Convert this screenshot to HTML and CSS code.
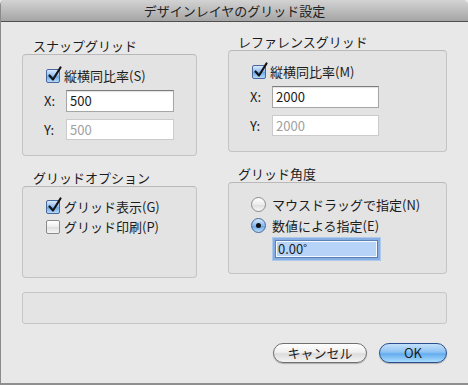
FILE: index.html
```html
<!DOCTYPE html>
<html lang="ja">
<head>
  <meta charset="UTF-8" />
  <title>デザインレイヤのグリッド設定</title>
  <link rel="stylesheet" href="styles.css">
</head>
<body>
  <div class="window">
    <!-- タイトルバー -->
    <div class="titlebar">デザインレイヤのグリッド設定</div>

    <div class="content">
      <div class="columns">
        <div class="col col-left">
          <div class="group">
            <div class="legend">スナップグリッド</div>
            <div class="box box-grid">
              <div class="opt"><span class="check on"><svg viewBox="0 0 16 16"><path d="M3.5 8.5 L7 12.5 L14.5 0.5" /></svg></span>縦横同比率(S)</div>
              <div class="field-row"><span class="axis">X:</span><div class="field">500</div></div>
              <div class="field-row"><span class="axis">Y:</span><div class="field off">500</div></div>
            </div>
          </div>
          <div class="group">
            <div class="legend">グリッドオプション</div>
            <div class="box box-opts">
              <div class="opt"><span class="check on"><svg viewBox="0 0 16 16"><path d="M3.5 8.5 L7 12.5 L14.5 0.5" /></svg></span>グリッド表示(G)</div>
              <div class="opt"><span class="check"></span>グリッド印刷(P)</div>
            </div>
          </div>
        </div>

        <div class="col col-right">
          <div class="group">
            <div class="legend">レファレンスグリッド</div>
            <div class="box box-grid">
              <div class="opt"><span class="check on"><svg viewBox="0 0 16 16"><path d="M3.5 8.5 L7 12.5 L14.5 0.5" /></svg></span>縦横同比率(M)</div>
              <div class="field-row"><span class="axis">X:</span><div class="field">2000</div></div>
              <div class="field-row"><span class="axis">Y:</span><div class="field off">2000</div></div>
            </div>
          </div>
          <div class="group">
            <div class="legend">グリッド角度</div>
            <div class="box box-angle">
              <div class="opt radio-row"><span class="radio"></span>マウスドラッグで指定(N)</div>
              <div class="opt radio-row"><span class="radio on"></span>数値による指定(E)</div>
              <div class="angle-field">0.00˚</div>
            </div>
          </div>
        </div>
      </div>

      <!-- メッセージ欄 -->
      <div class="message"></div>

      <div class="buttons">
        <button class="btn">キャンセル</button>
        <button class="btn btn-default">OK</button>
      </div>
    </div>
  </div>
</body>
</html>
```

FILE: styles.css
```css
* {
  box-sizing: border-box;
}
body {
  margin: 0;
  background: #e8e8e8;
  font-family: "Noto Sans CJK JP", sans-serif;
  font-size: 13px;
  color: #1c1c1c;
}
.window {
  width: 468px;
  height: 385px;
  background: #e8e8e8;
  border-left: 1px solid #8b8b8b;
  border-bottom: 2px solid #8f8f8f;
  border-radius: 5px 5px 0 0;
  overflow: hidden;
}
.titlebar {
  height: 22px;
  line-height: 21px;
  text-align: center;
  color: #222;
  background: linear-gradient(#d3d3d3, #a5a5a5);
  border-bottom: 1px solid #4f4f4f;
}
.content {
  padding: 0 21px;
}
.columns {
  display: flex;
  gap: 31px;
}
.col-left {
  width: 175px;
  padding-top: 16px;
}
.col-right {
  width: 219px;
  padding-top: 12px;
}
.group + .group {
  margin-top: 14px;
}
.legend {
  line-height: 16px;
  padding-left: 11px;
}
.col-right .legend {
  padding-left: 10px;
}

/* グループボックス */
.box {
  border: 1px solid #c4c4c4;
  border-top-color: #b9b9b9;
  border-radius: 4px;
  background: #e3e3e3;
}
.box-grid {
  height: 102px;
  padding: 13px 0 0 21px;
}
.box-opts {
  height: 92px;
  padding: 10px 0 0 23px;
}
.box-angle {
  height: 92px;
  padding: 11px 0 0 22px;
}

.opt {
  display: flex;
  align-items: center;
  gap: 4px;
  height: 16px;
  line-height: 16px;
}
.box-grid .opt {
  margin-left: 2px;
}
.box-opts .opt {
  height: 20px;
}
.radio-row {
  height: 21px;
  gap: 6px;
}

/* チェックボックス */
.check {
  position: relative;
  flex: none;
  width: 14px;
  height: 14px;
  border: 1px solid #8a8a8a;
  border-radius: 2px;
  background: linear-gradient(#ffffff, #ececec 50%, #dedede 51%, #f6f6f6);
}
.check.on {
  border-color: #47689a;
  background: linear-gradient(#dbe9fb, #8dbbef 50%, #6aa6e8 51%, #b4d8f7);
}
.check svg {
  position: absolute;
  left: -1px;
  top: -3px;
  width: 16px;
  height: 16px;
  overflow: visible;
}
.check path {
  fill: none;
  stroke: #141414;
  stroke-width: 2.2;
  stroke-linecap: round;
  stroke-linejoin: round;
}

/* ラジオボタン */
.radio {
  position: relative;
  flex: none;
  width: 15px;
  height: 15px;
  border: 1px solid #8a8a8a;
  border-radius: 50%;
  background: linear-gradient(#ffffff, #ececec 50%, #dcdcdc 51%, #f7f7f7);
}
.radio.on {
  border-color: #47689a;
  background: linear-gradient(#d8e8fb, #8bbaee 50%, #66a3e7 51%, #b7daf8);
}
.radio.on::after {
  content: "";
  position: absolute;
  left: 4px;
  top: 4px;
  width: 5px;
  height: 5px;
  border-radius: 50%;
  background: #111;
}

/* テキストフィールド */
.field-row {
  display: flex;
  align-items: center;
  margin-top: 6px;
}
.field-row + .field-row {
  margin-top: 7px;
}
.axis {
  width: 22px;
  line-height: 16px;
}
.field {
  width: 108px;
  height: 22px;
  line-height: 20px;
  padding-left: 3px;
  background: #fff;
  border: 1px solid #a6a6a6;
  border-top-color: #7c7c7c;
  box-shadow: inset 0 1px 1px rgba(0, 0, 0, 0.12);
}
.col-right .field {
  width: 107px;
}
.field.off {
  height: 21px;
  color: #a0a0a0;
  border-color: #cbcbcb;
  box-shadow: none;
}
.angle-field {
  width: 103px;
  height: 18px;
  margin: 4px 0 0 24px;
  padding-left: 2px;
  line-height: 16px;
  background: #b7d4f8;
  border: 1px solid #5a7fb2;
  box-shadow: inset 0 0 0 1px #f4f8ff, 0 0 0 2px #86aee2, 0 0 0 3px #adc9ec;
}

.message {
  height: 32px;
  margin-top: 14px;
  border: 1px solid #c6c6c6;
  border-radius: 3px;
  background: #e4e4e4;
}

/* ボタン */
.buttons {
  display: flex;
  justify-content: flex-end;
  gap: 12px;
  margin-top: 19px;
}
.btn {
  width: 94px;
  height: 20px;
  padding: 0;
  font-family: "Noto Sans CJK JP", sans-serif;
  font-size: 13px;
  line-height: 18px;
  color: #1c1c1c;
  border: 1px solid #707070;
  border-radius: 10px;
  background: linear-gradient(#fefefe, #f0f0f0 45%, #dcdcdc 55%, #f4f4f4);
  box-shadow: 0 1px 1px rgba(0, 0, 0, 0.25);
}
.btn-default {
  width: 68px;
  border-color: #2c4e8e;
  background: linear-gradient(#c5e0fa, #8ec3f3 45%, #64acee 55%, #a8dcfc);
}
```
